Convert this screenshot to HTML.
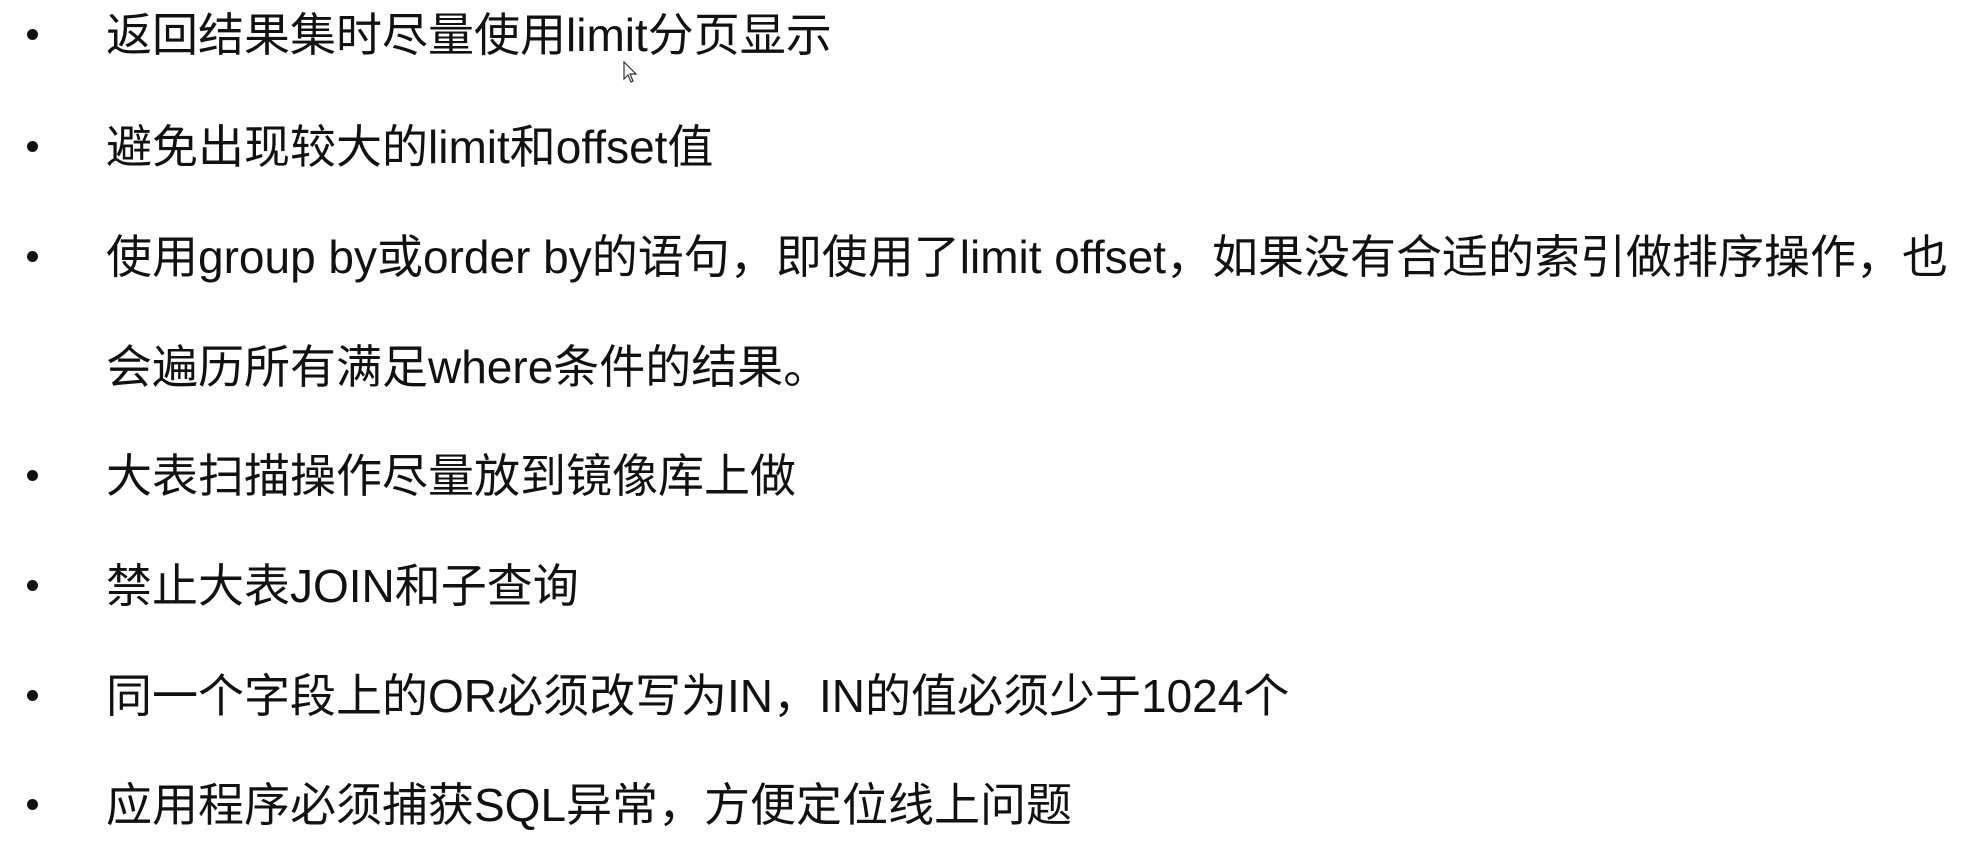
<!DOCTYPE html>
<html><head><meta charset="utf-8"><style>
html,body{margin:0;padding:0;background:#fff;width:1967px;height:845px;overflow:hidden;}
.l{position:absolute;left:106px;height:50px;line-height:50px;font-size:46px;color:#111;white-space:nowrap;font-family:"Liberation Sans","Noto Sans CJK SC",sans-serif;}
.b{position:absolute;left:27px;width:11px;height:11px;border-radius:50%;background:#111;}
</style></head><body>
<div class="b" style="top:29px"></div><div class="l" style="top:10px">返回结果集时尽量使用limit分页显示</div>
<div class="b" style="top:141px"></div><div class="l" style="top:122px">避免出现较大的limit和offset值</div>
<div class="b" style="top:251px"></div><div class="l" style="top:232px">使用group by或order by的语句，即使用了limit offset，如果没有合适的索引做排序操作，也</div>
<div class="l" style="top:342px">会遍历所有满足where条件的结果。</div>
<div class="b" style="top:470px"></div><div class="l" style="top:451px">大表扫描操作尽量放到镜像库上做</div>
<div class="b" style="top:580px"></div><div class="l" style="top:561px">禁止大表JOIN和子查询</div>
<div class="b" style="top:690px"></div><div class="l" style="top:671px">同一个字段上的OR必须改写为IN，IN的值必须少于1024个</div>
<div class="b" style="top:799px"></div><div class="l" style="top:780px">应用程序必须捕获SQL异常，方便定位线上问题</div>
<svg style="position:absolute;left:623px;top:61px" width="16" height="24" viewBox="0 0 16 24"><path d="M1 1 L1 18 L5 14 L8 21 L10 20 L7 13 L13 13 Z" fill="#fff" stroke="#333" stroke-width="1.2"/></svg>
</body></html>
